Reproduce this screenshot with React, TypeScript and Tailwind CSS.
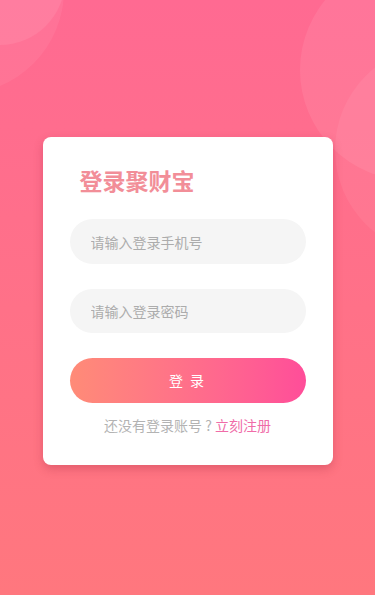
import React from "react";

export default function App() {
  return (
    <div
      className="relative w-[375px] h-[595px] overflow-hidden bg-gradient-to-b from-[#ff6a92] to-[#ff777e]"
      style={{ fontFamily: '"Noto Sans CJK SC", "Noto Sans", sans-serif' }}
    >
      {/* decorative circles */}
      <div className="absolute left-[-144px] top-[-114px] w-[208px] h-[208px] rounded-full bg-white/[0.06]" />
      <div className="absolute left-[-65px] top-[-85px] w-[130px] h-[130px] rounded-full bg-white/[0.08]" />
      <div className="absolute left-[300px] top-[-40px] w-[220px] h-[220px] rounded-full bg-white/[0.08]" />
      <div className="absolute left-[335px] top-[45px] w-[210px] h-[210px] rounded-full bg-white/[0.06]" />

      <div className="relative flex justify-center pt-[137px]">
        <div className="flex w-[290px] flex-col rounded-[8px] bg-white px-[27px] pt-[28px] pb-[30px] shadow-[0_4px_10px_rgba(160,40,60,0.3)]">
          <div className="ml-[10px] text-[23px] leading-[31px] font-bold text-[#f28e98]">
            登录聚财宝
          </div>
          <div className="mt-[23px] flex flex-col gap-[25px]">
            <input
              className="block w-full h-[45px] rounded-full bg-[#f5f5f5] pl-[21px] text-[14px] text-[#555] outline-none placeholder:text-[#acacac]"
              placeholder="请输入登录手机号"
            />
            <input
              type="password"
              className="block w-full h-[44px] rounded-full bg-[#f5f5f5] pl-[21px] text-[14px] text-[#555] outline-none placeholder:text-[#acacac]"
              placeholder="请输入登录密码"
            />
            <button className="block w-full h-[45px] rounded-full bg-gradient-to-r from-[#ff8b77] to-[#ff4d99] text-white text-[14px] tracking-[2px]">
              登 录
            </button>
          </div>
          <div className="mt-[12px] text-center text-[14px] leading-[20px] text-[#b3b3b3]">
            还没有登录账号 ? <span className="text-[#f06ca8]">立刻注册</span>
          </div>
        </div>
      </div>
    </div>
  );
}
